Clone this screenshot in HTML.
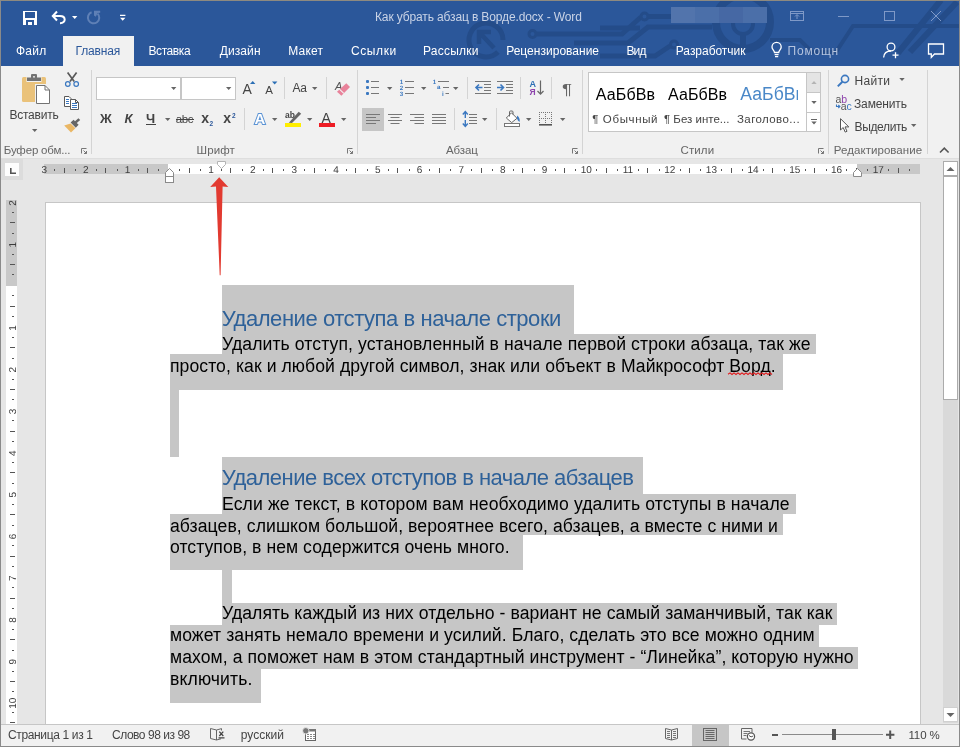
<!DOCTYPE html>
<html lang="ru">
<head>
<meta charset="utf-8">
<title>Как убрать абзац в Ворде.docx - Word</title>
<style>
html,body{margin:0;padding:0;background:#fff;}
body{width:968px;height:755px;position:relative;overflow:hidden;font-family:'Liberation Sans',sans-serif;}
.a{position:absolute;}
.t{position:absolute;white-space:pre;line-height:normal;font-family:'Liberation Sans',sans-serif;}
#win{left:0;top:0;width:960px;height:747px;background:#e6e6e6;overflow:hidden;}
#titlebar{left:0;top:0;width:960px;height:66px;background:#2b579a;}
#tabsel{left:63px;top:36px;width:71px;height:30px;background:#f1f1f1;}
#ribbon{left:0;top:66px;width:960px;height:92px;background:#f1f1f1;border-bottom:1px solid #dedede;}
.sep{position:absolute;width:1px;background:#d4d4d4;}
.combo{position:absolute;background:#fff;border:1px solid #c6c6c6;box-sizing:border-box;}
#page{left:45px;top:202px;width:876px;height:522px;background:#fff;border:1px solid #c6c6c6;border-bottom:none;box-sizing:border-box;}
.sel{position:absolute;background:#c6c6c6;}
#status{left:0;top:724px;width:960px;height:22px;background:#f1f1f1;border-top:1px solid #c6c6c6;box-sizing:border-box;}
#ov{position:absolute;left:0;top:0;width:968px;height:755px;pointer-events:none;}
</style>
</head>
<body>
<div id="win" class="a">
  <div id="titlebar" class="a"></div>
  <svg class="a" style="left:0;top:0" width="960" height="66" viewBox="0 0 960 66">
  <g fill="none" stroke="#244c89" stroke-width="5" stroke-linecap="butt">
    <path d="M498 52 A17 17 0 1 1 503 40"/>
    <path d="M494 48 L480 33 M479 44 V32 H491" stroke-width="4.5"/>
    <circle cx="532.5" cy="34" r="3.5" stroke-width="3"/>
    <path d="M537 34 H622 L641 17"/>
    <circle cx="644.5" cy="16.5" r="3.5" stroke-width="3"/>
    <path d="M649 16.5 H700"/>
    <path d="M574 43 H628 L648 27 H712"/>
    <circle cx="674" cy="44.5" r="3.5" stroke-width="3"/>
    <path d="M670 46 L655 56 H600"/>
    <circle cx="743" cy="22" r="27" stroke-width="8"/>
    <circle cx="743" cy="24" r="10" stroke-width="4"/>
    <path d="M743 34 V50" stroke-width="6"/>
    <path d="M770 40 H800 L812 52 H836 L853 26 H960" stroke-width="4"/>
    <path d="M898 53 L941 0 M910 52 L957 2" stroke-width="6"/>
    <path d="M600 28 L640 28" />
  </g>
  <rect x="671" y="7" width="96" height="16" fill="#4b6fa9"/>
  <rect x="671" y="7" width="24" height="16" fill="#5274ac"/>
  <rect x="719" y="7" width="24" height="16" fill="#4668a4"/>
</svg>

  <div id="tabsel" class="a"></div>
  <div id="ribbon" class="a"></div>
  <!-- group separators -->
<div class="sep" style="left:91px;top:70px;height:84px"></div>
<div class="sep" style="left:357px;top:70px;height:84px"></div>
<div class="sep" style="left:582px;top:70px;height:84px"></div>
<div class="sep" style="left:828px;top:70px;height:84px"></div>
<div class="sep" style="left:927px;top:70px;height:84px"></div>
<!-- small separators -->
<div class="sep" style="left:284px;top:77px;height:22px"></div>
<div class="sep" style="left:326px;top:77px;height:22px"></div>
<div class="sep" style="left:244px;top:108px;height:22px"></div>
<div class="sep" style="left:467px;top:77px;height:22px"></div>
<div class="sep" style="left:520px;top:77px;height:22px"></div>
<div class="sep" style="left:551px;top:77px;height:22px"></div>
<div class="sep" style="left:454px;top:108px;height:22px"></div>
<div class="sep" style="left:496px;top:108px;height:22px"></div>
<!-- combos -->
<div class="combo" style="left:96px;top:77px;width:85px;height:23px"></div>
<div class="combo" style="left:181px;top:77px;width:55px;height:23px"></div>
<!-- align-left active -->
<div class="a" style="left:362px;top:108px;width:22px;height:23px;background:#c6c6c6"></div>
<!-- gallery -->
<div class="a" style="left:588px;top:72px;width:233px;height:60px;background:#fff;border:1px solid #c6c6c6;box-sizing:border-box"></div>
<div class="a" style="left:806px;top:72px;width:15px;height:21px;background:#e4e4e4;border:1px solid #c6c6c6;box-sizing:border-box"></div>
<div class="a" style="left:806px;top:92px;width:15px;height:21px;background:#fff;border:1px solid #c6c6c6;box-sizing:border-box"></div>
<div class="a" style="left:806px;top:112px;width:15px;height:20px;background:#fff;border:1px solid #c6c6c6;box-sizing:border-box"></div>

  <!-- tab selector box -->
<div class="a" style="left:1px;top:159px;width:22px;height:21px;background:#dcdcdc"></div>
<div class="a" style="left:5px;top:163px;width:14px;height:13px;background:#fdfdfd"></div>
<!-- horizontal ruler -->
<div class="a" style="left:44px;top:164px;width:876px;height:10px;background:#c8c8c8"></div>
<div class="a" style="left:168px;top:164px;width:689px;height:10px;background:#fff"></div>
<!-- vertical ruler -->
<div class="a" style="left:6px;top:200px;width:11px;height:524px;background:#fff"></div>
<div class="a" style="left:6px;top:200px;width:11px;height:86px;background:#c8c8c8"></div>

  <div id="page" class="a"></div>
  <div class="sel" style="left:222px;top:285px;width:352px;height:49px"></div>
<div class="sel" style="left:222px;top:334px;width:594px;height:20px"></div>
<div class="sel" style="left:170px;top:354px;width:613px;height:36px"></div>
<div class="sel" style="left:170px;top:390px;width:9px;height:67px"></div>
<div class="sel" style="left:222px;top:457px;width:421px;height:37px"></div>
<div class="sel" style="left:222px;top:494px;width:574px;height:20px"></div>
<div class="sel" style="left:170px;top:514px;width:613px;height:21px"></div>
<div class="sel" style="left:170px;top:535px;width:353px;height:35px"></div>
<div class="sel" style="left:222px;top:570px;width:10px;height:33px"></div>
<div class="sel" style="left:222px;top:603px;width:615px;height:22px"></div>
<div class="sel" style="left:170px;top:625px;width:649px;height:22px"></div>
<div class="sel" style="left:170px;top:647px;width:688px;height:22px"></div>
<div class="sel" style="left:170px;top:669px;width:91px;height:34px"></div>

  <div class="a" style="left:943px;top:161px;width:15px;height:562px;background:#d9d9d9"></div>
<div class="a" style="left:943px;top:161px;width:15px;height:15px;background:#fff;border:1px solid #ababab;box-sizing:border-box"></div>
<div class="a" style="left:943px;top:176px;width:15px;height:224px;background:#fff;border:1px solid #ababab;box-sizing:border-box"></div>
<div class="a" style="left:943px;top:707px;width:15px;height:15px;background:#fff;border:1px solid #d0d0d0;box-sizing:border-box"></div>

  <div id="status" class="a"></div>
  <div class="a" style="left:692px;top:725px;width:37px;height:21px;background:#c6c6c6"></div>

</div>
<div id="txt" class="a" style="left:0;top:0;width:968px;height:755px;will-change:transform">
<span class="t" style="left:375.00px;top:10px;font-size:12px;color:#c9d3e6;letter-spacing:-0.129px;">Как убрать абзац в Ворде.docx - Word</span>
<span class="t" style="left:16.00px;top:44px;font-size:12px;color:#ffffff;letter-spacing:0.250px;">Файл</span>
<span class="t" style="left:148.50px;top:44px;font-size:12px;color:#ffffff;letter-spacing:-0.417px;">Вставка</span>
<span class="t" style="left:219.80px;top:44px;font-size:12px;color:#ffffff;letter-spacing:0.080px;">Дизайн</span>
<span class="t" style="left:288.30px;top:44px;font-size:12px;color:#ffffff;letter-spacing:0.175px;">Макет</span>
<span class="t" style="left:351.00px;top:44px;font-size:12px;color:#ffffff;letter-spacing:0.600px;">Ссылки</span>
<span class="t" style="left:423.00px;top:44px;font-size:12px;color:#ffffff;letter-spacing:0.243px;">Рассылки</span>
<span class="t" style="left:506.20px;top:44px;font-size:12px;color:#ffffff;letter-spacing:0.015px;">Рецензирование</span>
<span class="t" style="left:626.50px;top:44px;font-size:12px;color:#ffffff;letter-spacing:-0.900px;">Вид</span>
<span class="t" style="left:675.80px;top:44px;font-size:12px;color:#ffffff;letter-spacing:-0.030px;">Разработчик</span>
<span class="t" style="left:75.50px;top:44px;font-size:12px;color:#2b579a;letter-spacing:-0.167px;">Главная</span>
<span class="t" style="left:787.50px;top:44px;font-size:12px;color:#b4c3de;letter-spacing:0.800px;">Помощн</span>
<span class="t" style="left:9.40px;top:108px;font-size:12px;color:#444;letter-spacing:-0.229px;">Вставить</span>
<span class="t" style="left:3.80px;top:144px;font-size:11.5px;color:#666;letter-spacing:-0.173px;">Буфер обм...</span>
<span class="t" style="left:196.50px;top:144px;font-size:11.5px;color:#666;letter-spacing:0.125px;">Шрифт</span>
<span class="t" style="left:446.00px;top:144px;font-size:11.5px;color:#666;letter-spacing:-0.125px;">Абзац</span>
<span class="t" style="left:680.50px;top:144px;font-size:11.5px;color:#666;letter-spacing:0.125px;">Стили</span>
<span class="t" style="left:833.80px;top:144px;font-size:11.5px;color:#666;letter-spacing:0.054px;">Редактирование</span>
<span class="t" style="left:854.60px;top:74px;font-size:12px;color:#444;letter-spacing:0.300px;">Найти</span>
<span class="t" style="left:854.00px;top:97px;font-size:12px;color:#444;letter-spacing:-0.143px;">Заменить</span>
<span class="t" style="left:854.60px;top:120px;font-size:12px;color:#444;letter-spacing:-0.371px;">Выделить</span>
<span class="t" style="left:100.00px;top:111px;font-size:13px;color:#444;letter-spacing:0.000px;font-weight:700;">Ж</span>
<span class="t" style="left:124.50px;top:111px;font-size:13px;color:#444;letter-spacing:0.000px;font-weight:700;font-style:italic;">К</span>
<span class="t" style="left:146.00px;top:111px;font-size:13px;color:#444;letter-spacing:0.000px;font-weight:700;">Ч</span>
<span class="t" style="left:175.75px;top:113px;font-size:11.5px;color:#444;letter-spacing:-0.375px;">abc</span>
<span class="t" style="left:201.25px;top:110px;font-size:14px;color:#444;letter-spacing:0.000px;font-weight:700;">x</span>
<span class="t" style="left:209.60px;top:120px;font-size:6.5px;color:#2b579a;letter-spacing:0.000px;font-weight:700;">2</span>
<span class="t" style="left:223.25px;top:110px;font-size:14px;color:#444;letter-spacing:0.000px;font-weight:700;">x</span>
<span class="t" style="left:232.00px;top:112px;font-size:6.5px;color:#2b579a;letter-spacing:0.000px;font-weight:700;">2</span>
<span class="t" style="left:242.40px;top:81px;font-size:14px;color:#444;letter-spacing:0.000px;">A</span>
<span class="t" style="left:265.20px;top:84px;font-size:11.5px;color:#444;letter-spacing:0.000px;">A</span>
<span class="t" style="left:292.40px;top:81px;font-size:12px;color:#444;letter-spacing:-0.100px;">Aa</span>
<span class="t" style="left:595.75px;top:86px;font-size:16px;color:#000;letter-spacing:0.150px;">АаБбВв</span>
<span class="t" style="left:668.00px;top:86px;font-size:16px;color:#000;letter-spacing:0.100px;">АаБбВв</span>
<span class="t" style="left:740.30px;top:84px;font-size:17.6px;color:#4a88c8;letter-spacing:0.040px;">АаБбВв</span>
<span class="t" style="left:592.25px;top:113px;font-size:11.5px;color:#444;letter-spacing:0.625px;">¶ Обычный</span>
<span class="t" style="left:664.00px;top:113px;font-size:11.5px;color:#444;letter-spacing:0.000px;">¶ Без инте...</span>
<span class="t" style="left:737.00px;top:113px;font-size:11.5px;color:#444;letter-spacing:0.400px;">Заголово...</span>
<span class="t" style="left:8.00px;top:728px;font-size:12px;color:#444;letter-spacing:-0.357px;">Страница 1 из 1</span>
<span class="t" style="left:112.00px;top:728px;font-size:12px;color:#444;letter-spacing:-0.462px;">Слово 98 из 98</span>
<span class="t" style="left:240.70px;top:728px;font-size:12px;color:#444;letter-spacing:0.050px;">русский</span>
<span class="t" style="left:908.40px;top:729px;font-size:11.5px;color:#444;letter-spacing:-0.100px;">110 %</span>
<span class="t" style="left:221.70px;top:306px;font-size:22px;color:#2e6199;letter-spacing:-0.442px;">Удаление отступа в начале строки</span>
<span class="t" style="left:222.00px;top:334px;font-size:17.6px;color:#000;letter-spacing:0.094px;">Удалить отступ, установленный в начале первой строки абзаца, так же</span>
<span class="t" style="left:170.00px;top:356px;font-size:17.6px;color:#000;letter-spacing:0.072px;">просто, как и любой другой символ, знак или объект в Майкрософт Ворд.</span>
<span class="t" style="left:221.70px;top:465px;font-size:22px;color:#2e6199;letter-spacing:-0.516px;">Удаление всех отступов в начале абзацев</span>
<span class="t" style="left:222.00px;top:494px;font-size:17.6px;color:#000;letter-spacing:0.116px;">Если же текст, в котором вам необходимо удалить отступы в начале</span>
<span class="t" style="left:170.00px;top:516px;font-size:17.6px;color:#000;letter-spacing:0.074px;">абзацев, слишком большой, вероятнее всего, абзацев, а вместе с ними и</span>
<span class="t" style="left:170.00px;top:537px;font-size:17.6px;color:#000;letter-spacing:0.053px;">отступов, в нем содержится очень много.</span>
<span class="t" style="left:222.00px;top:603px;font-size:17.6px;color:#000;letter-spacing:0.076px;">Удалять каждый из них отдельно - вариант не самый заманчивый, так как</span>
<span class="t" style="left:170.00px;top:625px;font-size:17.6px;color:#000;letter-spacing:0.093px;">может занять немало времени и усилий. Благо, сделать это все можно одним</span>
<span class="t" style="left:170.00px;top:647px;font-size:17.6px;color:#000;letter-spacing:0.078px;">махом, а поможет нам в этом стандартный инструмент - “Линейка”, которую нужно</span>
<span class="t" style="left:170.00px;top:669px;font-size:17.6px;color:#000;letter-spacing:0.125px;">включить.</span>
</div>
<div class="a" style="left:798px;top:80px;width:8px;height:26px;background:#fff"></div>
<svg id="ov" viewBox="0 0 968 755" width="968" height="755">
<g id="qat">
  <!-- save -->
  <path fill="#fff" fill-rule="evenodd" d="M23 11h14v14h-14z M25 12v6h10v-6z M26 20v5h2v-3h4v3h2v-5z"/>
  <!-- undo -->
  <path fill="none" stroke="#fff" stroke-width="2" d="M57 11.5 L52.8 16 L57 20.5 M53 16 H60 C66 16 66.5 23 60 23.2"/>
  <path fill="#fff" d="M72 16h5.4l-2.7 3z"/>
  <!-- redo (disabled) -->
  <path fill="none" stroke="#5f80b6" stroke-width="2" d="M97.6 13.6 A5.7 5.7 0 1 1 91.6 12.3"/>
  <path fill="#5f80b6" d="M94 10.8h6.2v1.9l-2.6.3-1.8 3.8-1.8-1.2z"/>
  <!-- customize -->
  <path fill="#fff" d="M120 14.8h5.4v1.3h-5.4z M120 17.7h5.4l-2.7 3z"/>
</g>
<g id="winctl" fill="none" stroke="#7f99c7" stroke-width="1">
  <rect x="790.5" y="11.5" width="13" height="9"/>
  <path d="M790.5 13.5h13 M797 19v-4 M795 16.5l2-2 2 2" />
  <path d="M838 16.5h11"/>
  <rect x="884.5" y="11.5" width="10" height="9"/>
  <path d="M931 11l10 10 M941 11l-10 10"/>
</g>
<g id="tabicons" fill="none" stroke="#fff" stroke-width="1.3">
  <!-- bulb -->
  <path d="M774.5 52.5 C774.5 50.5 772 49.5 772 47 A4.6 4.6 0 0 1 781.2 47 C781.2 49.5 778.7 50.5 778.7 52.5 Z M774.6 54.6h4 M775 56.6h3.2"/>
  <!-- person+ -->
  <circle cx="891" cy="47" r="3.9"/>
  <path d="M883.6 57.5 C884 52.5 887 51 891 51 M892.5 55.2h6 M895.5 52.2v6"/>
  <!-- comment -->
  <path d="M928.5 44h15v10h-9l-3.2 3.4v-3.4h-2.8z"/>
</g>

<g id="clip">
  <!-- paste -->
  <rect x="22" y="77" width="24" height="25" rx="1.5" fill="#eac27a"/>
  <rect x="26.5" y="76.5" width="15" height="5.5" fill="#f1f1f1"/>
  <path fill="#737373" d="M27 77.4h4v-2.4q0-1 1-1h4q1 0 1 1v2.4h4v3.5h-14z"/>
  <rect x="33.2" y="76" width="1.6" height="1.6" fill="#f1f1f1"/>
  <rect x="35" y="84" width="16" height="20.6" fill="#f1f1f1"/>
  <path fill="#fff" stroke="#737373" stroke-width="1" d="M36.5 85.5h8.5l4.5 4.5v13.5h-13z"/>
  <path fill="none" stroke="#737373" stroke-width="1" d="M45 85.5v4.5h4.5"/>
  <path fill="#666" d="M32 129h5.4l-2.7 3z"/>
  <!-- cut -->
  <path fill="none" stroke="#595959" stroke-width="1.7" d="M67.6 72.6 L74.2 81.6 M76.6 72.6 L70 81.6"/>
  <circle cx="67.8" cy="84" r="2.3" fill="none" stroke="#3b78c0" stroke-width="1.2"/>
  <circle cx="76.2" cy="84" r="2.3" fill="none" stroke="#3b78c0" stroke-width="1.2"/>
  <!-- copy -->
  <path fill="#fff" stroke="#595959" stroke-width="1" d="M64.5 96.5h4.5l2 2v8h-6.5z"/>
  <path fill="#fff" stroke="#595959" stroke-width="1" d="M70.5 99.5h5l3 3v7h-8z"/>
  <path fill="none" stroke="#595959" stroke-width="1" d="M75.5 99.5v3h3"/>
  <path fill="none" stroke="#3b78c0" stroke-width="1" d="M66 99.5h3 M66 101.5h3 M66 103.5h3 M72 103.5h5 M72 105.5h5 M72 107.5h5"/>
  <!-- format painter -->
  <path fill="#eab765" d="M64.2 125.4 L70.6 123.4 L75.4 128.2 L71 132.6 Z"/>
  <path fill="#666" d="M70.6 122.6 L73.6 119.8 L75 121.2 L78.4 118.2 L80.2 120 L76.8 123 L78.6 124.8 L75.8 127.8 Z"/>
  <!-- dialog launchers -->
  <g fill="none" stroke="#777" stroke-width="1">
    <path d="M86.5 148.5h-5v5 M83.5 150.5l3 3 M86.5 151v2.5h-2.5"/>
    <path d="M352.5 148.5h-5v5 M349.5 150.5l3 3 M352.5 151v2.5h-2.5"/>
    <path d="M577.5 148.5h-5v5 M574.5 150.5l3 3 M577.5 151v2.5h-2.5"/>
    <path d="M823.5 148.5h-5v5 M820.5 150.5l3 3 M823.5 151v2.5h-2.5"/>
  </g>
</g>
<g id="fontgrp">
  <!-- combo arrows -->
  <path fill="#666" d="M171 87h5.4l-2.7 3z M226 87h5.4l-2.7 3z"/>
  <!-- underline of Ч + arrow -->
  <rect x="146" y="124" width="10" height="1" fill="#444"/>
  <path fill="#666" d="M165 118h5.4l-2.7 3z"/>
  <!-- strikethrough abc -->
  <rect x="176" y="119" width="18" height="1" fill="#444"/>
  <!-- grow/shrink triangles -->
  <path fill="#2b6fb5" d="M250 84h5.4l-2.7-3z"/>
  <path fill="#2b6fb5" d="M272 81.5h5.4l-2.7 3z"/>
  <!-- Aa arrow -->
  <path fill="#666" d="M312 87h5.4l-2.7 3z"/>
  <!-- clear formatting -->
  <text x="335" y="89.5" font-family="'Liberation Sans',sans-serif" font-size="11" font-style="italic" fill="#555">A</text>
  <path fill="#e8829a" d="M346.3 83.2 L350 86.9 L341.4 95.7 L337 91.7 Z"/>
  <path fill="#f1f1f1" d="M339.8 88.8 L344.2 92.9 L343.400 93.7 L339 89.600 Z"/>
  <!-- text effects A -->
  <text x="254.4" y="123.6" font-family="'Liberation Sans',sans-serif" font-size="15" font-weight="700" fill="#fff" stroke="#5b93d4" stroke-width="2" paint-order="stroke">A</text>
  <path fill="#666" d="M272 118h5.4l-2.7 3z"/>
  <!-- highlight -->
  <text x="285" y="118.3" font-family="'Liberation Sans',sans-serif" font-size="8.5" font-weight="700" fill="#444">ab</text>
  <path fill="#666" d="M288.8 122.7 L298.7 111.8 L301.2 113.7 L292 122.9 Z"/>
  <rect x="285" y="123" width="16" height="4" fill="#ffee00"/>
  <path fill="#666" d="M307 118h5.4l-2.7 3z"/>
  <!-- font colour -->
  <text x="321.6" y="122.5" font-family="'Liberation Sans',sans-serif" font-size="14" fill="#444">A</text>
  <rect x="319" y="123" width="16" height="4" fill="#ee1c24"/>
  <path fill="#666" d="M341 118h5.4l-2.7 3z"/>
</g>

<g id="paragrp">
<text x="399.8" y="84" font-family="'Liberation Sans',sans-serif" font-size="6.2" font-weight="700" text-rendering="geometricPrecision" fill="#3b78c0">1</text>
<text x="399.8" y="90" font-family="'Liberation Sans',sans-serif" font-size="6.2" font-weight="700" text-rendering="geometricPrecision" fill="#3b78c0">2</text>
<text x="399.8" y="96" font-family="'Liberation Sans',sans-serif" font-size="6.2" font-weight="700" text-rendering="geometricPrecision" fill="#3b78c0">3</text>
<text x="432.8" y="84" font-family="'Liberation Sans',sans-serif" font-size="6.2" font-weight="700" text-rendering="geometricPrecision" fill="#3b78c0">1</text>
<text x="437" y="89" font-family="'Liberation Sans',sans-serif" font-size="6.2" font-weight="700" text-rendering="geometricPrecision" fill="#3b78c0">a</text>
<text x="442" y="96" font-family="'Liberation Sans',sans-serif" font-size="6.2" font-weight="700" text-rendering="geometricPrecision" fill="#3b78c0">i</text>
<rect x="366" y="80" width="3" height="3" rx="1" fill="#3b78c0"/>
<rect x="371" y="81" width="8" height="1" fill="#777"/>
<rect x="366" y="86" width="3" height="3" rx="1" fill="#3b78c0"/>
<rect x="371" y="87" width="8" height="1" fill="#777"/>
<rect x="366" y="92" width="3" height="3" rx="1" fill="#3b78c0"/>
<rect x="371" y="93" width="8" height="1" fill="#777"/>
<path fill="#666" d="M387 87h5.4l-2.7 3z"/>
<rect x="405" y="81" width="9" height="1" fill="#777"/>
<rect x="405" y="87" width="9" height="1" fill="#777"/>
<rect x="405" y="93" width="9" height="1" fill="#777"/>
<path fill="#666" d="M421 87h5.4l-2.7 3z"/>
<rect x="438" y="81" width="11" height="1" fill="#777"/>
<rect x="443" y="87" width="6" height="1" fill="#777"/>
<rect x="445.5" y="93" width="3.5" height="1" fill="#777"/>
<path fill="#666" d="M453 87h5.4l-2.7 3z"/>
<rect x="475" y="81" width="16" height="1" fill="#777"/>
<rect x="475" y="93" width="16" height="1" fill="#777"/>
<rect x="484" y="84" width="7" height="1" fill="#777"/>
<rect x="484" y="87" width="7" height="1" fill="#777"/>
<rect x="484" y="90" width="7" height="1" fill="#777"/>
<path fill="none" stroke="#3b78c0" stroke-width="1.6" d="M482.5 87.5H476 M479 84.5l-3 3 3 3"/>
<rect x="497" y="81" width="16" height="1" fill="#777"/>
<rect x="497" y="93" width="16" height="1" fill="#777"/>
<rect x="506" y="84" width="7" height="1" fill="#777"/>
<rect x="506" y="87" width="7" height="1" fill="#777"/>
<rect x="506" y="90" width="7" height="1" fill="#777"/>
<path fill="none" stroke="#3b78c0" stroke-width="1.6" d="M497 87.5H503.5 M500.5 84.5l3 3 -3 3"/>
<text x="529.4" y="87" font-family="'Liberation Sans',sans-serif" font-size="9" font-weight="700" fill="#2b6fb5">A</text>
<text x="529.4" y="95" font-family="'Liberation Sans',sans-serif" font-size="8.5" font-weight="700" fill="#8e44ad">Я</text>
<path fill="none" stroke="#666" stroke-width="1.2" d="M540.5 80.5V94 M537.5 91l3 3.2 3-3.2"/>
<text x="562" y="93.5" textLength="10" lengthAdjust="spacingAndGlyphs" font-family="'Liberation Sans',sans-serif" font-size="15.5" fill="#666">¶</text>
<rect x="366" y="114" width="14" height="1" fill="#777"/>
<rect x="366" y="117" width="10" height="1" fill="#777"/>
<rect x="366" y="120" width="14" height="1" fill="#777"/>
<rect x="366" y="123" width="10" height="1" fill="#777"/>
<rect x="388" y="114" width="14" height="1" fill="#777"/>
<rect x="390.5" y="117" width="9.0" height="1" fill="#777"/>
<rect x="388" y="120" width="14" height="1" fill="#777"/>
<rect x="390.5" y="123" width="9.0" height="1" fill="#777"/>
<rect x="410" y="114" width="14" height="1" fill="#777"/>
<rect x="414.5" y="117" width="9.5" height="1" fill="#777"/>
<rect x="410" y="120" width="14" height="1" fill="#777"/>
<rect x="414.5" y="123" width="9.5" height="1" fill="#777"/>
<rect x="432" y="114" width="14" height="1" fill="#777"/>
<rect x="432" y="117" width="14" height="1" fill="#777"/>
<rect x="432" y="120" width="14" height="1" fill="#777"/>
<rect x="432" y="123" width="14" height="1" fill="#777"/>
<rect x="469" y="114" width="8" height="1" fill="#777"/>
<rect x="469" y="117" width="8" height="1" fill="#777"/>
<rect x="469" y="120" width="8" height="1" fill="#777"/>
<rect x="469" y="123" width="8" height="1" fill="#777"/>
<path fill="none" stroke="#3b78c0" stroke-width="1.4" d="M465.3 111.6V118 M465.3 120V126.4 M462.8 114.5l2.5-3 2.5 3 M462.8 123.5l2.5 3 2.5-3"/>
<path fill="#666" d="M482 118h5.4l-2.7 3z"/>
<rect x="504.5" y="123.5" width="15" height="3" fill="#fff" stroke="#777"/>
<path fill="#fff" stroke="#666" stroke-width="1" d="M511.5 112.8 L517 118.3 L511.7 122.6 L506.3 118 Z"/>
<path fill="none" stroke="#666" stroke-width="1" d="M509.5 116.5v-4.5q0-1 1-1h1.5q1 0 1 1v2.5"/>
<path fill="#3b78c0" d="M517 115.5 q3.5 2.5 2.5 6.5 q-2 -1.5 -2.5 -3.5z"/>
<path fill="#666" d="M526 118h5.4l-2.7 3z"/>
<path fill="#777" d="M539 112h1v1h-1z M539 118h1v1h-1z M541 112h1v1h-1z M541 118h1v1h-1z M543 112h1v1h-1z M543 118h1v1h-1z M545 112h1v1h-1z M545 118h1v1h-1z M547 112h1v1h-1z M547 118h1v1h-1z M549 112h1v1h-1z M549 118h1v1h-1z M551 112h1v1h-1z M551 118h1v1h-1z M539 114h1v1h-1z M545 114h1v1h-1z M551 114h1v1h-1z M539 116h1v1h-1z M545 116h1v1h-1z M551 116h1v1h-1z M539 118h1v1h-1z M545 118h1v1h-1z M551 118h1v1h-1z M539 120h1v1h-1z M545 120h1v1h-1z M551 120h1v1h-1z M539 122h1v1h-1z M545 122h1v1h-1z M551 122h1v1h-1z"/>
<rect x="539" y="124" width="13" height="1.6" fill="#555"/>
<path fill="#666" d="M560 118h5.4l-2.7 3z"/>
</g>
<g id="gal">
<path fill="#b4b4b4" d="M811.3 84h5.4l-2.7-3z"/>
<path fill="#666" d="M811.3 101h5.4l-2.7 3z"/>
<path fill="#666" d="M811 119h6v1h-6z M811.3 121.5h5.4l-2.7 3z"/>
</g>
<g id="edit">
<circle cx="845" cy="79" r="3.6" fill="none" stroke="#3b78c0" stroke-width="1.6"/><path stroke="#3b78c0" stroke-width="2" d="M842.4 81.8l-4.6 4.6"/>
<path fill="#666" d="M899.3 78h5.4l-2.7 3z"/>
<text x="835.5" y="103" font-family="'Liberation Sans',sans-serif" font-size="10.5" fill="#555">a</text>
<text x="841.3" y="103" font-family="'Liberation Sans',sans-serif" font-size="10.5" fill="#8e44ad">b</text>
<text x="840.8" y="110" font-family="'Liberation Sans',sans-serif" font-size="10.5" fill="#555">a</text>
<text x="846.6" y="110" font-family="'Liberation Sans',sans-serif" font-size="10.5" fill="#3b78c0">c</text>
<path fill="none" stroke="#3b78c0" stroke-width="1.1" d="M836.5 104.5v2h3.3 M838.3 105l1.6 1.5 -1.6 1.5"/>
<path fill="#fff" stroke="#555" stroke-width="1" d="M840.5 118.7v11.3l2.7-2.500 2 4.600 1.800-.8-2-4.400h3.800z"/>
<path fill="#666" d="M911 124h5.4l-2.7 3z"/>
<path fill="none" stroke="#555" stroke-width="1.6" d="M940 152.5l4.3-4.3 4.3 4.3"/>
</g>
<g id="hruler">
<text x="44.2" y="173" text-anchor="middle" font-family="'Liberation Sans',sans-serif" font-size="10" text-rendering="geometricPrecision" fill="#3c3c3c">3</text>
<text x="85.9" y="173" text-anchor="middle" font-family="'Liberation Sans',sans-serif" font-size="10" text-rendering="geometricPrecision" fill="#3c3c3c">2</text>
<text x="127.6" y="173" text-anchor="middle" font-family="'Liberation Sans',sans-serif" font-size="10" text-rendering="geometricPrecision" fill="#3c3c3c">1</text>
<text x="211.0" y="173" text-anchor="middle" font-family="'Liberation Sans',sans-serif" font-size="10" text-rendering="geometricPrecision" fill="#3c3c3c">1</text>
<text x="252.7" y="173" text-anchor="middle" font-family="'Liberation Sans',sans-serif" font-size="10" text-rendering="geometricPrecision" fill="#3c3c3c">2</text>
<text x="294.4" y="173" text-anchor="middle" font-family="'Liberation Sans',sans-serif" font-size="10" text-rendering="geometricPrecision" fill="#3c3c3c">3</text>
<text x="336.1" y="173" text-anchor="middle" font-family="'Liberation Sans',sans-serif" font-size="10" text-rendering="geometricPrecision" fill="#3c3c3c">4</text>
<text x="377.8" y="173" text-anchor="middle" font-family="'Liberation Sans',sans-serif" font-size="10" text-rendering="geometricPrecision" fill="#3c3c3c">5</text>
<text x="419.5" y="173" text-anchor="middle" font-family="'Liberation Sans',sans-serif" font-size="10" text-rendering="geometricPrecision" fill="#3c3c3c">6</text>
<text x="461.2" y="173" text-anchor="middle" font-family="'Liberation Sans',sans-serif" font-size="10" text-rendering="geometricPrecision" fill="#3c3c3c">7</text>
<text x="502.9" y="173" text-anchor="middle" font-family="'Liberation Sans',sans-serif" font-size="10" text-rendering="geometricPrecision" fill="#3c3c3c">8</text>
<text x="544.6" y="173" text-anchor="middle" font-family="'Liberation Sans',sans-serif" font-size="10" text-rendering="geometricPrecision" fill="#3c3c3c">9</text>
<text x="586.3" y="173" text-anchor="middle" font-family="'Liberation Sans',sans-serif" font-size="10" text-rendering="geometricPrecision" fill="#3c3c3c">10</text>
<text x="628.0" y="173" text-anchor="middle" font-family="'Liberation Sans',sans-serif" font-size="10" text-rendering="geometricPrecision" fill="#3c3c3c">11</text>
<text x="669.7" y="173" text-anchor="middle" font-family="'Liberation Sans',sans-serif" font-size="10" text-rendering="geometricPrecision" fill="#3c3c3c">12</text>
<text x="711.4" y="173" text-anchor="middle" font-family="'Liberation Sans',sans-serif" font-size="10" text-rendering="geometricPrecision" fill="#3c3c3c">13</text>
<text x="753.1" y="173" text-anchor="middle" font-family="'Liberation Sans',sans-serif" font-size="10" text-rendering="geometricPrecision" fill="#3c3c3c">14</text>
<text x="794.8" y="173" text-anchor="middle" font-family="'Liberation Sans',sans-serif" font-size="10" text-rendering="geometricPrecision" fill="#3c3c3c">15</text>
<text x="836.5" y="173" text-anchor="middle" font-family="'Liberation Sans',sans-serif" font-size="10" text-rendering="geometricPrecision" fill="#3c3c3c">16</text>
<text x="878.2" y="173" text-anchor="middle" font-family="'Liberation Sans',sans-serif" font-size="10" text-rendering="geometricPrecision" fill="#3c3c3c">17</text>
<path fill="#555" d="M64 168h1v5h-1z M105 168h1v5h-1z M147 168h1v5h-1z M189 168h1v5h-1z M230 168h1v5h-1z M272 168h1v5h-1z M314 168h1v5h-1z M355 168h1v5h-1z M397 168h1v5h-1z M439 168h1v5h-1z M481 168h1v5h-1z M522 168h1v5h-1z M564 168h1v5h-1z M606 168h1v5h-1z M647 168h1v5h-1z M689 168h1v5h-1z M731 168h1v5h-1z M772 168h1v5h-1z M814 168h1v5h-1z M856 168h1v5h-1z M898 168h1v5h-1z M54 169h1v2h-1z M75 169h1v2h-1z M96 169h1v2h-1z M117 169h1v2h-1z M138 169h1v2h-1z M158 169h1v2h-1z M179 169h1v2h-1z M200 169h1v2h-1z M221 169h1v2h-1z M242 169h1v2h-1z M263 169h1v2h-1z M283 169h1v2h-1z M304 169h1v2h-1z M325 169h1v2h-1z M346 169h1v2h-1z M367 169h1v2h-1z M388 169h1v2h-1z M409 169h1v2h-1z M429 169h1v2h-1z M450 169h1v2h-1z M471 169h1v2h-1z M492 169h1v2h-1z M513 169h1v2h-1z M534 169h1v2h-1z M555 169h1v2h-1z M575 169h1v2h-1z M596 169h1v2h-1z M617 169h1v2h-1z M638 169h1v2h-1z M659 169h1v2h-1z M680 169h1v2h-1z M700 169h1v2h-1z M721 169h1v2h-1z M742 169h1v2h-1z M763 169h1v2h-1z M784 169h1v2h-1z M805 169h1v2h-1z M826 169h1v2h-1z M846 169h1v2h-1z M867 169h1v2h-1z M888 169h1v2h-1z M909 169h1v2h-1z"/>
<path fill="#fff" stroke="#8a8a8a" stroke-width="1" d="M169.5 168.5 L173.5 172.5 V176.5 H165.5 V172.5 Z"/>
<rect x="165.5" y="176.5" width="8" height="6" fill="#fff" stroke="#8a8a8a"/>
<path fill="#fff" stroke="#b4b4b4" stroke-width="1" d="M217.5 161.5 H225.5 V164.5 L221.5 168.5 L217.5 164.5 Z"/>
<path fill="#fff" stroke="#8a8a8a" stroke-width="1" d="M857.5 168.5 L861.5 172.5 V176.5 H853.5 V172.5 Z"/>
<path fill="none" stroke="#555" stroke-width="1.6" d="M10.8 168v5.2h5.2"/>
</g>
<g id="vruler">
<text transform="translate(16.2 202.9) rotate(-90)" text-anchor="middle" font-family="'Liberation Sans',sans-serif" font-size="10" text-rendering="geometricPrecision" fill="#3c3c3c">2</text>
<text transform="translate(16.2 244.6) rotate(-90)" text-anchor="middle" font-family="'Liberation Sans',sans-serif" font-size="10" text-rendering="geometricPrecision" fill="#3c3c3c">1</text>
<text transform="translate(16.2 328.0) rotate(-90)" text-anchor="middle" font-family="'Liberation Sans',sans-serif" font-size="10" text-rendering="geometricPrecision" fill="#3c3c3c">1</text>
<text transform="translate(16.2 369.7) rotate(-90)" text-anchor="middle" font-family="'Liberation Sans',sans-serif" font-size="10" text-rendering="geometricPrecision" fill="#3c3c3c">2</text>
<text transform="translate(16.2 411.4) rotate(-90)" text-anchor="middle" font-family="'Liberation Sans',sans-serif" font-size="10" text-rendering="geometricPrecision" fill="#3c3c3c">3</text>
<text transform="translate(16.2 453.1) rotate(-90)" text-anchor="middle" font-family="'Liberation Sans',sans-serif" font-size="10" text-rendering="geometricPrecision" fill="#3c3c3c">4</text>
<text transform="translate(16.2 494.8) rotate(-90)" text-anchor="middle" font-family="'Liberation Sans',sans-serif" font-size="10" text-rendering="geometricPrecision" fill="#3c3c3c">5</text>
<text transform="translate(16.2 536.5) rotate(-90)" text-anchor="middle" font-family="'Liberation Sans',sans-serif" font-size="10" text-rendering="geometricPrecision" fill="#3c3c3c">6</text>
<text transform="translate(16.2 578.2) rotate(-90)" text-anchor="middle" font-family="'Liberation Sans',sans-serif" font-size="10" text-rendering="geometricPrecision" fill="#3c3c3c">7</text>
<text transform="translate(16.2 619.9) rotate(-90)" text-anchor="middle" font-family="'Liberation Sans',sans-serif" font-size="10" text-rendering="geometricPrecision" fill="#3c3c3c">8</text>
<text transform="translate(16.2 661.6) rotate(-90)" text-anchor="middle" font-family="'Liberation Sans',sans-serif" font-size="10" text-rendering="geometricPrecision" fill="#3c3c3c">9</text>
<text transform="translate(16.2 703.3) rotate(-90)" text-anchor="middle" font-family="'Liberation Sans',sans-serif" font-size="10" text-rendering="geometricPrecision" fill="#3c3c3c">10</text>
<path fill="#555" d="M10 722h5v1h-5z M10 222h5v1h-5z M10 264h5v1h-5z M10 306h5v1h-5z M10 347h5v1h-5z M10 389h5v1h-5z M10 431h5v1h-5z M10 472h5v1h-5z M10 514h5v1h-5z M10 556h5v1h-5z M10 598h5v1h-5z M10 639h5v1h-5z M10 681h5v1h-5z M12 212h2v1h-2z M12 233h2v1h-2z M12 254h2v1h-2z M12 274h2v1h-2z M12 295h2v1h-2z M12 316h2v1h-2z M12 337h2v1h-2z M12 358h2v1h-2z M12 379h2v1h-2z M12 399h2v1h-2z M12 420h2v1h-2z M12 441h2v1h-2z M12 462h2v1h-2z M12 483h2v1h-2z M12 504h2v1h-2z M12 525h2v1h-2z M12 545h2v1h-2z M12 566h2v1h-2z M12 587h2v1h-2z M12 608h2v1h-2z M12 629h2v1h-2z M12 650h2v1h-2z M12 671h2v1h-2z M12 691h2v1h-2z M12 712h2v1h-2z"/>
</g>
<g id="redarrow">
<path fill="#e23a30" d="M219.2 177.2 L228.3 187 L222.6 186.6 L220.6 275.2 L219.7 275.2 L216 186.6 L210.2 187 Z"/>
</g>
<path id="squiggle" fill="none" stroke="#e2181a" stroke-width="1.1" d="M728 374.2 L730 372.9 L732 374.5 L734 372.9 L736 374.5 L738 372.9 L740 374.5 L742 372.9 L744 374.5 L746 372.9 L748 374.5 L750 372.9 L752 374.5 L754 372.9 L756 374.5 L758 372.9 L760 374.5 L762 372.9 L764 374.5 L766 372.9 L768 374.5 L770 372.9 L772 374.5"/>

<g id="statusic" fill="none" stroke="#666" stroke-width="1">
  <!-- proofing book -->
  <path d="M216.5 740 V730 L210.5 728.5 V738.5 L216.5 740 L221 738.8 M216.5 730 L221.5 728.6 V730.5"/>
  <path stroke="#444" stroke-width="1.3" d="M219.3 731.6l4 4.4 M223.3 731.6l-4 4.4 M218.5 737.8h6"/>
  <!-- macro -->
  <rect x="305.5" y="729.5" width="10" height="11" fill="#fff"/>
  <rect x="305" y="729" width="11" height="2.5" fill="#777" stroke="none"/>
  <path stroke="#888" d="M307 734.5h2 M310 734.5h2 M313 734.5h2 M307 736.5h2 M310 736.5h2 M313 736.5h2 M307 738.5h2 M310 738.5h2 M313 738.5h2"/>
  <circle cx="305.8" cy="730.8" r="3.2" fill="#777" stroke="#f1f1f1" stroke-width="0.8"/>
  <!-- read mode -->
  <path d="M671.5 740 V730 L665.5 728.5 V738.5 L671.5 740 L677.5 738.5 V728.5 L671.5 730"/>
  <path stroke="#777" d="M667 731.5h3 M667 733.5h3 M667 735.5h3 M667 737.5h3 M673 731.5h3 M673 733.5h3 M673 735.5h3 M673 737.5h3"/>
  <!-- print layout -->
  <rect x="703.5" y="728.5" width="13" height="12"/>
  <path d="M705.5 730.5h9 M705.5 732.5h9 M705.5 734.5h9 M705.5 736.5h9 M705.5 738.5h9"/>
  <!-- web layout -->
  <path d="M741.5 728.5h10.5v4 M741.5 728.5v10.5h5"/>
  <path stroke="#777" d="M743.5 731.5h6.5 M743.5 733.5h4 M743.5 735.5h3"/>
  <circle cx="751" cy="736.5" r="3.6" fill="#fff" stroke="#555" stroke-width="1.2"/>
  <path stroke="#555" d="M749 735.5q2 2.5 4.2 0.5"/>
  <!-- zoom slider -->
  <rect x="772" y="734" width="6" height="2" fill="#555" stroke="none"/>
  <rect x="782" y="734" width="101" height="1" fill="#8a8a8a" stroke="none"/>
  <rect x="832" y="729" width="4" height="11" fill="#555" stroke="none"/>
  <path fill="#555" stroke="none" d="M886 733.8h3.2v-3.2h2v3.2h3.2v2h-3.2v3.2h-2v-3.2h-3.2z"/>
</g>
<g id="scrollarrows">
  <path fill="#666" d="M946.5 171h8l-4-4z"/>
  <path fill="#666" d="M946.5 713h8l-4 4z"/>
</g>

</svg>

<!-- window borders -->
<div class="a" style="left:0;top:0;width:960px;height:1px;background:#8e8a80"></div>
<div class="a" style="left:0;top:0;width:1px;height:747px;background:#8a8a8a"></div>
<div class="a" style="left:959px;top:0;width:1px;height:747px;background:#8a8a8a"></div>
<div class="a" style="left:0;top:746px;width:960px;height:1px;background:#8a8a8a"></div>
</body>
</html>
